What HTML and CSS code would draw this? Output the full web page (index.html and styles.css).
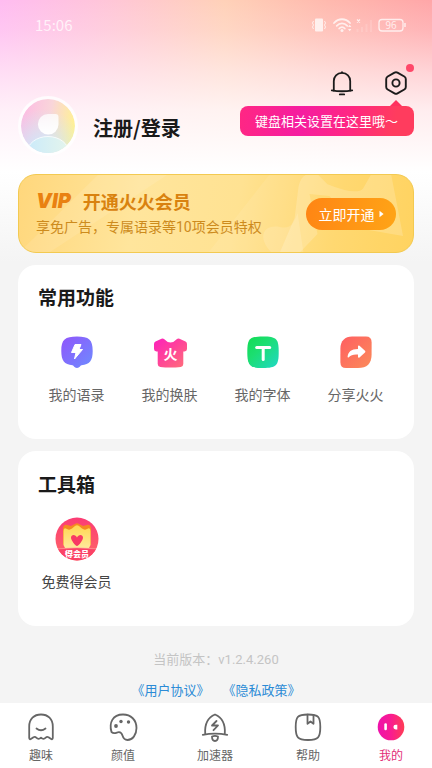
FILE: index.html
```html
<!DOCTYPE html>
<html lang="zh-CN">
<head>
<meta charset="utf-8">
<meta name="viewport" content="width=device-width, initial-scale=1">
<title>我的</title>
<link rel="stylesheet" href="styles.css">
</head>
<body>
<div class="status">
  <time>15:06</time>
  <svg class="status-icons" width="96" height="20" viewBox="0 0 96 20" fill="none" stroke="#fff" aria-hidden="true">
    <rect x="5" y="3.500" width="8" height="13" rx="1" fill="#fff" stroke="none"/>
    <path d="M3.500 6l-1 2 1 2-1 2 1 2M14.500 6l1 2-1 2 1 2-1 2"/>
    <g stroke-width="1.800" stroke-linecap="round"><path d="M24 8c4.500-5 11.500-5 16 0M26.700 10.800c3-3.200 7.600-3.200 10.600 0M29.200 13.500c1.700-1.800 3.900-1.800 5.600 0"/></g>
    <circle cx="32" cy="15.500" r="1.500" fill="#fff" stroke="none"/>
    <path d="M38 12l1.700-2.200L41.400 12zM38 14l1.700 2.200L41.400 14z" fill="#fff" stroke="none"/>
    <path d="M47 4.500l3 3M50 4.500l-3 3" stroke-width="1.300"/>
    <path d="M47.500 17v-3M52 17v-5M56.500 17v-8M61 17V5" stroke-width="2" opacity=".2"/>
    <rect x="69" y="4.500" width="24" height="11.500" rx="3" stroke-width="1.300"/>
    <path d="M95 8v4" stroke-width="1.500"/>
    <text x="81" y="13.500" text-anchor="middle" class="battery">96</text>
  </svg>
</div>

<header class="actions">
  <button class="icon-btn" aria-label="通知">
    <svg width="26" height="28" viewBox="0 0 26 28" fill="none" stroke="#1b1b1b" stroke-width="1.800" stroke-linecap="round" stroke-linejoin="round">
      <path d="M4.800 21.500V12C4.800 7.500 8 3.900 13 3.900s8.200 3.600 8.200 8.100v9.500"/><path d="M13 3.700v-.5M2.800 21.400c6 1 14.400 1 20.400 0M10.800 25.400h4.400"/>
    </svg>
  </button>
  <div class="settings">
    <button class="icon-btn" aria-label="设置" aria-describedby="tip">
      <svg width="26" height="28" viewBox="0 0 26 28" fill="none" stroke="#1b1b1b" stroke-width="1.900" stroke-linejoin="round">
        <path d="M11.500 3.600q1.500-.8 3 0l6.800 3.900q1.500.9 1.500 2.600v7.800q0 1.700-1.500 2.600l-6.800 3.900q-1.500.8-3 0l-6.800-3.900q-1.500-.9-1.500-2.600v-7.800q0-1.700 1.500-2.600z"/><circle cx="13" cy="14" r="3.600"/>
      </svg>
    </button>
    <span class="dot"></span>
    <div class="tip" id="tip" role="tooltip">键盘相关设置在这里哦～</div>
  </div>
</header>

<main>
  <a class="profile" href="#login">
    <span class="avatar">
      <svg width="54" height="54" viewBox="0 0 54 54" aria-hidden="true">
        <defs>
          <linearGradient id="head" x2="0" y2="1"><stop stop-color="#fff" stop-opacity=".75"/><stop offset="1" stop-color="#fff"/></linearGradient>
          <linearGradient id="torso" x2="1" y2="0"><stop stop-color="#cbeafa"/><stop offset="1" stop-color="#e4f5ec"/></linearGradient>
        </defs>
        <path d="M27 15h7.500q3 0 3 3v7.500a10.300 10.300 0 1 1-10.500-10.500z" fill="url(#head)"/>
        <ellipse cx="27" cy="54" rx="21" ry="16.500" fill="url(#torso)" stroke="#fff" stroke-opacity=".75"/>
      </svg>
    </span>
    <span class="name">注册/登录</span>
  </a>

  <section class="vip">
    <svg class="vip-art" viewBox="0 0 396 79" preserveAspectRatio="xMaxYMid slice" aria-hidden="true">
      <path d="M0 79L80 0H150L30 79z" fill="#fff" opacity=".1"/>
      <path d="M190 79L252 0H396V79z" fill="#fff" opacity=".08"/>
      <path d="M277 44L281 12Q284 0 292 0H300L310 10Q340 22 346 14L354 0H374L386 62L340 54L312 22L292 20L300 60L282 79H262z" fill="#fff" opacity=".18"/>
      <path d="M254 79c-15-15-9-29 8-26 10 2 13-1 18-14l6 40z" fill="#fff" opacity=".14"/>
    </svg>
    <div class="vip-text">
      <h2><em>VIP</em>开通火火会员</h2>
      <p>享免广告，专属语录等10项会员特权</p>
    </div>
    <button class="vip-btn">立即开通<svg width="5" height="8" viewBox="0 0 5 8" aria-hidden="true"><path d="M.5.8L4.600 4 .5 7.200z" fill="#fff"/></svg></button>
  </section>

  <section class="card">
    <h2>常用功能</h2>
    <div class="grid">
      <a href="#quotes">
        <svg width="36" height="36" viewBox="0 0 36 36" aria-hidden="true">
          <defs><linearGradient id="violet" x2="1" y2="1"><stop stop-color="#9155fb"/><stop offset="1" stop-color="#6d8cff"/></linearGradient></defs>
          <path d="M18 2.500c12 0 15.700 3 15.700 14.500 0 9.500-3 13.500-11.200 14.300-1.500.1-1.500 2.700-4.500 2.700s-3-2.600-4.500-2.700C5.300 30.500 2.300 26.500 2.300 17 2.300 5.500 6 2.500 18 2.500z" fill="url(#violet)"/>
          <path d="M16 10.500h6l-2 5h3.500L15.500 25l1.500-6.500h-4.500z" fill="#fff" stroke="#fff" stroke-linejoin="round"/>
        </svg>
        <span>我的语录</span></a>
      <a href="#skins">
        <svg width="36" height="36" viewBox="0 0 36 36" aria-hidden="true">
          <defs><linearGradient id="rose" x2="1" y2="1"><stop stop-color="#fc20bd"/><stop offset=".45" stop-color="#ff419b"/><stop offset="1" stop-color="#ff7278"/></linearGradient></defs>
          <path d="M9.500 4.800q1.500-.8 2.500.2 6.500 7 13 0 1-1 2.500-.2l6 2.700q1.500.7 1.500 2.500v5q0 2.400-2.400 2.400h-1.300V30q0 2.500-2.500 2.900-10.300 1.200-20.600 0-2.500-.4-2.500-2.900V17.400H4.400Q2 17.400 2 15v-5q0-1.800 1.500-2.500z" fill="url(#rose)"/>
          <text x="18.500" y="25" text-anchor="middle" class="skin-mark">火</text>
        </svg>
        <span>我的换肤</span></a>
      <a href="#fonts">
        <svg width="36" height="36" viewBox="0 0 36 36" aria-hidden="true">
          <defs><linearGradient id="green" x2="1" y2="1"><stop stop-color="#12dc52"/><stop offset=".4" stop-color="#1cde72"/><stop offset="1" stop-color="#20d8c6"/></linearGradient></defs>
          <path d="M18 2.500C31.500 2.500 33.700 4.700 33.700 18S31.500 34 18 34 2.300 31.300 2.300 18 4.500 2.500 18 2.500z" fill="url(#green)"/>
          <rect x="10.200" y="12" width="16" height="3" rx="1.500" fill="#fff"/><rect x="16.700" y="12" width="3" height="15" rx="1.500" fill="#fff"/>
        </svg>
        <span>我的字体</span></a>
      <a href="#share">
        <svg width="36" height="36" viewBox="0 0 36 36" aria-hidden="true">
          <defs><linearGradient id="coral" x2="1" y2="1"><stop stop-color="#ff5e61"/><stop offset="1" stop-color="#fb8b5a"/></linearGradient></defs>
          <path d="M14 2.600h14q5.600 0 5.600 5.600V20c0 10-4.600 14-13.600 14H8q-5.600 0-5.600-5.500V14.500C2.400 7 7 2.600 14 2.600z" fill="url(#coral)"/>
          <path d="M20 15v-2.800q.3-1.200 1.500-.4l5.500 5q.9.900 0 1.800l-5.500 5q-1.200.7-1.500-.5V20.500c-4.500-.4-7 .5-9.200 2.700-.8.600-1.300.2-1.200-.7C10.200 18 13 15 20 15z" fill="#fff"/>
        </svg>
        <span>分享火火</span></a>
    </div>
  </section>

  <section class="card tools">
    <h2>工具箱</h2>
    <div class="grid">
      <a href="#free">
        <svg width="44" height="44" viewBox="0 0 44 44" aria-hidden="true">
          <defs>
            <linearGradient id="badge" x2="0" y2="1"><stop stop-color="#fb3b75"/><stop offset="1" stop-color="#ff6a64"/></linearGradient>
            <linearGradient id="gold" x2="0" y2="1"><stop stop-color="#ffd750"/><stop offset="1" stop-color="#ffe99b"/></linearGradient>
            <clipPath id="round"><circle cx="22" cy="22" r="21.500"/></clipPath>
          </defs>
          <g clip-path="url(#round)">
            <path d="M0 0h44v44H0z" fill="url(#badge)"/>
            <path d="M8 28V11q1-4 4-3l4 1 4-2q2-1.500 4 0l4 2 4-1q3-1 4 3v17z" fill="#f58a20"/>
            <path d="M8.500 28V14q0-4 3.500-2 2.500 1.500 5-.5l3-2.500q2-1.500 4 0l3 2.500q2.500 2 5 .5 3.500-2 3.500 2v14l-1.500 3H10z" fill="url(#gold)"/>
            <path d="M22 29c-1.800 0-6-6-6-8.200 0-4 4.800-3.700 6-.3 1.200-3.400 6-3.700 6 .3C28 23 23.800 29 22 29z" fill="#f83964"/>
            <path d="M0 32.500q22-3 44 0V44H0z" fill="#fb4266"/>
            <path d="M0 32q22-2.500 44 0" fill="none" stroke="#ff9f9c" stroke-width=".7"/>
            <text x="22" y="39.500" text-anchor="middle" class="badge-text">得会员</text>
          </g>
        </svg>
        <span>免费得会员</span></a>
    </div>
  </section>
</main>

<footer>
  <p>当前版本：v1.2.4.260</p>
  <div class="legal"><a href="#terms">《用户协议》</a><a href="#privacy">《隐私政策》</a></div>
</footer>

<nav>
  <a href="#fun">
    <svg class="line" width="30" height="30" viewBox="0 0 30 30" aria-hidden="true"><path d="M3.200 26V14.500C3.200 7 8 2.500 15 2.500s11.800 4.500 11.800 12V26q-.2 2-2 .8l-2.300-1.600q-1.500-.8-2.800.4-2.200 2.400-4.700 0-2.500 2.400-4.700 0-1.300-1.200-2.800-.4l-2.300 1.600Q3.400 28 3.200 26z"/><path d="M10.500 16.500q4.500 3.500 9 0"/></svg>
    趣味</a>
  <a href="#face">
    <svg class="line" width="30" height="30" viewBox="0 0 30 30" aria-hidden="true"><path d="M3.500 20C.8 11 4.500 2.500 15 2.500c8 0 13.500 5.500 13.500 13.500 0 7-4 12-9 12-7 0-3-7.500-8.500-7.800-3-.1-4.500 2.600-7.500-.2z"/><g fill="#666" stroke="none"><circle cx="8" cy="14" r="1.900"/><circle cx="13" cy="9.500" r="1.700"/><circle cx="20.500" cy="10" r="1.700"/></g></svg>
    颜值</a>
  <a href="#boost">
    <svg class="line" width="30" height="30" viewBox="0 0 30 30" aria-hidden="true"><path d="M5.200 21.500C4.500 11 8 5.500 15 2.500c7 3 10.500 8.500 9.800 19M2.800 22.800q12.200-2.200 24.400 0"/><path d="M16.500 9l-4.500 4.500h6l-4.500 4.700"/><path d="M12 24.500q3-1.200 6 0c0 3-1.500 4.500-3 4.500s-3-1.500-3-4.500z"/></svg>
    加速器</a>
  <a href="#help">
    <svg class="line" width="30" height="30" viewBox="0 0 30 30" aria-hidden="true"><path d="M15 2.500c10.500 0 12.300 2 12.300 12.500S25.500 28 15 28 2.700 25.500 2.700 15 4.500 2.500 15 2.500z"/><path d="M14.500 2.700v9.100l3-2.300 3 2.300V3"/></svg>
    帮助</a>
  <a href="#me" class="active" aria-current="page">
    <svg width="30" height="30" viewBox="0 0 30 30" aria-hidden="true"><defs><linearGradient id="me-fill" x2="1"><stop stop-color="#ee12ac"/><stop offset=".5" stop-color="#f91c90"/><stop offset="1" stop-color="#ff3d54"/></linearGradient></defs><circle cx="15" cy="15" r="13.300" fill="url(#me-fill)"/><rect x="8.300" y="11.300" width="2.600" height="7" rx="1.200" fill="#fff"/><path d="M21.300 12.800v4.600h-1.600a2.300 2.300 0 0 1 0-4.600z" fill="#fff"/></svg>
    我的</a>
</nav>
</body>
</html>
```
FILE: styles.css
```css
* { box-sizing: border-box; }

body {
  margin: 0;
  min-height: 100vh;
  display: flex;
  flex-direction: column;
  font-family: "Noto Sans CJK SC", sans-serif;
  font-size: 14px;
  line-height: 20px;
  color: #1a1a1a;
  background:
    linear-gradient(to bottom, rgba(255, 240, 246, 0) 0, rgba(255, 240, 246, .2) 30px, rgba(255, 243, 247, .6) 72px, rgba(255, 248, 250, .86) 110px, #fff 172px, #f4f4f4 262px),
    linear-gradient(to right, #ffbcf1 0, #ffc6d8 25%, #ffd1b8 52%, #ffb9ae 76%, #ffa6a8 100%);
}

h2, p { margin: 0; }
a { color: inherit; text-decoration: none; }
button { border: 0; padding: 0; font: inherit; cursor: pointer; }
svg { display: block; flex: none; }

.status {
  height: 50px;
  padding: 0 26px 0 35px;
  display: flex;
  align-items: center;
  justify-content: space-between;
  color: rgba(255, 255, 255, .75);
  font-size: 15px;
}
.status-icons { opacity: .75; }
.battery { font: 10px "Noto Sans CJK SC", sans-serif; fill: #fff; stroke: none; }

.actions {
  display: flex;
  justify-content: flex-end;
  gap: 24px;
  padding: 18px 21px 0 0;
}
.icon-btn {
  width: 30px;
  height: 30px;
  display: grid;
  place-items: center;
  background: none;
}
.settings { position: relative; }
.dot {
  position: absolute;
  top: -4px;
  right: -3px;
  width: 8px;
  height: 8px;
  border-radius: 50%;
  background: #ff4869;
}
.tip {
  position: absolute;
  top: 38px;
  right: -3px;
  padding: 0 16px 0 15px;
  border-radius: 8px;
  font-size: 13px;
  line-height: 30px;
  white-space: nowrap;
  color: #fff;
  background: linear-gradient(100deg, #ff2783 0, #f51da0 35%, #ff2783 62%, #ff3c5e 88%);
}
.tip::before {
  content: "";
  position: absolute;
  top: -6px;
  right: 12px;
  border: solid transparent;
  border-width: 0 6px 6px;
  border-bottom-color: #ff315f;
}

main {
  padding: 0 18px;
  display: flex;
  flex-direction: column;
  gap: 12px;
}

.profile {
  display: flex;
  align-items: center;
  align-self: flex-start;
  gap: 15px;
  margin: -2px 0 6px;
}
.avatar {
  width: 60px;
  height: 60px;
  border: 3px solid rgba(255, 255, 255, .8);
  border-radius: 50%;
  overflow: hidden;
  background:
    radial-gradient(circle at 40% 100%, #c8ebff 0, rgba(200, 235, 255, 0) 70%),
    linear-gradient(100deg, #fcbfe2 10%, #f9d5da 50%, #fff095 90%);
  background-clip: padding-box;
}
.name { padding-top: 3px; font-size: 20px; font-weight: 700; line-height: 28px; }

.vip {
  position: relative;
  display: flex;
  align-items: center;
  justify-content: space-between;
  height: 79px;
  padding: 0 18px 0 17px;
  border: 1px solid #f3ca51;
  border-radius: 18px;
  overflow: hidden;
  background: linear-gradient(100deg, #ffd77c 0, #ffe59c 30%, #ffe292 55%, #ffd565 80%, #ffd053 100%);
}
.vip-art { position: absolute; inset: 0; width: 100%; height: 100%; }
.vip-text, .vip-btn { position: relative; }
.vip-text { padding-bottom: 2px; color: #cd8b1d; white-space: nowrap; }
.vip h2 {
  display: flex;
  align-items: center;
  gap: 12px;
  font-size: 18px;
  font-weight: 700;
  line-height: 28px;
  color: #d9820f;
}
.vip em { font: italic 900 20px/28px Inter, sans-serif; color: #e98111; }
.vip p { font-family: Roboto, "Noto Sans CJK SC", sans-serif; line-height: 24px; }
.vip-btn {
  display: flex;
  align-items: center;
  justify-content: center;
  gap: 4px;
  width: 90px;
  height: 32px;
  border-radius: 16px;
  margin-right: -1px;
  color: #fff;
  background: linear-gradient(100deg, #ff8514, #ffa416);
}

.card {
  padding: 18px 12px 31px;
  border-radius: 18px;
  background: #fff;
}
.card h2 {
  padding-left: 8px;
  font-size: 19px;
  font-weight: 700;
  line-height: 28px;
}
.grid {
  display: grid;
  grid-template-columns: repeat(4, 1fr);
  margin-top: 23px;
}
.grid a {
  display: flex;
  flex-direction: column;
  align-items: center;
  gap: 14px;
  padding-bottom: 4px;
  color: #666;
  white-space: nowrap;
}
.tools { padding-top: 19px; }
.tools .grid { margin-top: 19px; }
.tools .grid a { gap: 10px; color: #444; }
.skin-mark { font: 700 14px "Noto Sans CJK SC", sans-serif; fill: #fff; }
.badge-text { font: 900 8px "Noto Sans CJK SC", sans-serif; fill: #fff; }

footer {
  padding: 24px 0 3px;
  text-align: center;
  font-family: Roboto, "Noto Sans CJK SC", sans-serif;
  font-size: 13px;
  color: #c4c4c4;
}
.legal {
  display: flex;
  justify-content: center;
  gap: 26px;
  margin-top: 10px;
  color: #2b8bd6;
  font-family: "Noto Sans CJK SC", sans-serif;
  font-feature-settings: "halt";
}

nav {
  margin-top: auto;
  display: grid;
  grid-template-columns: 41fr 41fr 51fr 42fr 41fr;
  height: 65px;
  padding-top: 9px;
  background: #fff;
  color: #666;
  font-size: 12px;
}
nav a {
  display: flex;
  flex-direction: column;
  align-items: center;
  gap: 3px;
}
.line { fill: none; stroke: #666; stroke-width: 1.8; stroke-linecap: round; stroke-linejoin: round; }
.active { color: #e22e78; }
```
